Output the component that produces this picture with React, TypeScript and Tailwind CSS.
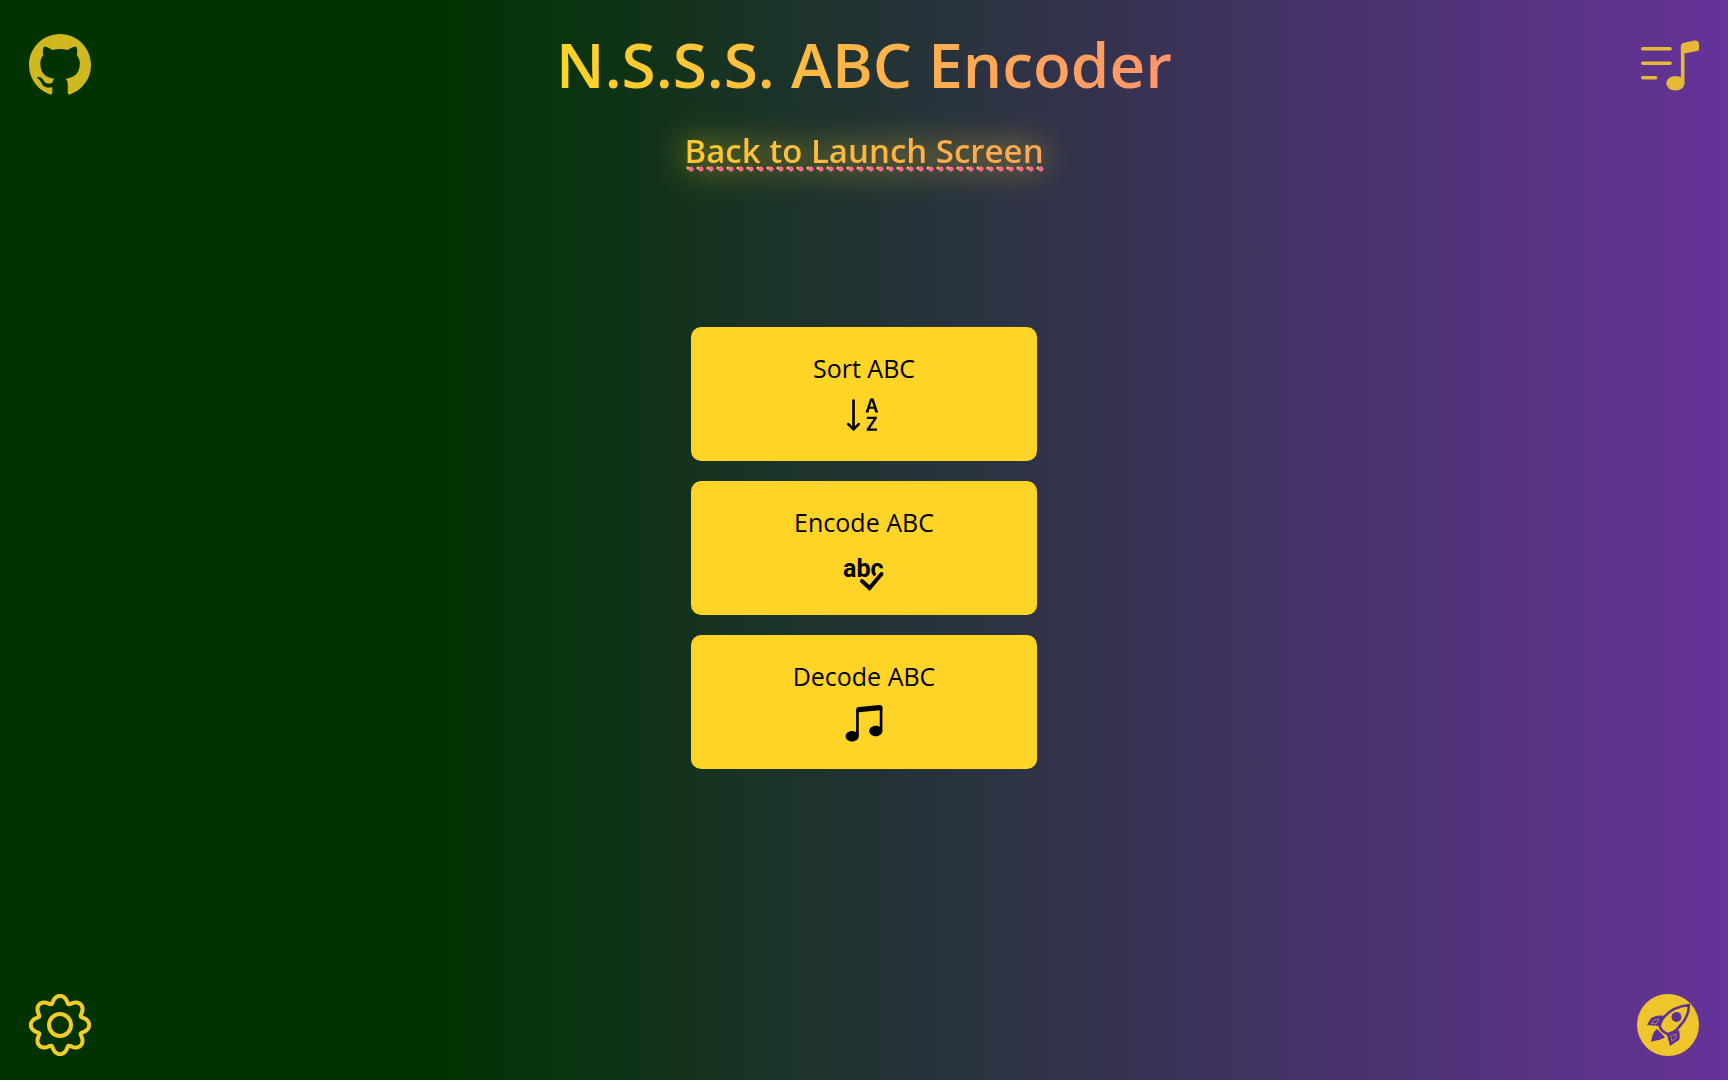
import type { ReactNode } from 'react';
import {
  BsGithub,
  BsMusicNoteBeamed,
  BsMusicNoteList,
  BsSortAlphaDown,
} from 'react-icons/bs';

const GEAR_OUTLINE = Array.from({ length: 160 }, (_, i) => {
  const t = (i / 160) * Math.PI * 2;
  const angle = t + 0.05 * Math.sin(8 * t);
  const radius = 25.8 + 3.4 * Math.cos(8 * t);
  return `${(31 + radius * Math.cos(angle)).toFixed(2)},${(31 + radius * Math.sin(angle)).toFixed(2)}`;
}).join(' ');

function SpellIcon() {
  return (
    <svg viewBox="0 0 42 42" className="size-[42px] overflow-visible" aria-hidden="true">
      <text x="0" y="29" fontFamily="Roboto, sans-serif" fontSize="25" fontWeight="700" fill="#000">
        abc
      </text>
      <path d="M20 33L26.500 39.500L38.500 26.500" fill="none" stroke="#fed426" strokeWidth="8" strokeLinecap="round" />
      <path d="M19 33L26.500 40L38.500 26" fill="none" stroke="#000" strokeWidth="4" strokeLinecap="round" />
    </svg>
  );
}

function GearIcon() {
  return (
    <svg viewBox="0 0 62 62" className="size-[62px]" fill="none" stroke="#f4cc26" strokeWidth="4" strokeLinejoin="round" aria-hidden="true">
      <circle cx="31" cy="31" r="11" />
      <polygon points={GEAR_OUTLINE} />
    </svg>
  );
}

function RocketIcon() {
  return (
    <svg viewBox="0 0 62 62" className="size-[62px]" aria-hidden="true">
      <circle cx="31" cy="31" r="31" fill="#eec52d" />
      <g fill="#5c3193">
        <path d="M14 24C18 22 22 21 27 22L22 32L10 31Z" />
        <path d="M42 36C43 40 43 44 42 46L33 52L30 41Z" />
        <path d="M20 35L28 43C25 46 20 46 14 48C15 43 16 38 20 35Z" />
      </g>
      <path d="M17 26L22 25L19 30L14 29Z M39 40L39 44L35 47L33.500 42Z" fill="none" stroke="#a98166" strokeWidth="1" />
      <path
        d="M52 11C42 12 33 16 27 23C24 26 24 29 22.500 32C24 36 27 39 31 40C35 39 38 38 42 33C49 26 52 19 52 11Z"
        fill="#eec52d"
        stroke="#5c3193"
        strokeWidth="2.500"
        strokeLinejoin="round"
      />
      <circle cx="39.500" cy="23" r="5" fill="#5c3193" />
    </svg>
  );
}

function Card({ label, children }: { label: string; children: ReactNode }) {
  return (
    <button
      type="button"
      className="flex w-full flex-col items-center gap-[10px] rounded-[10px] bg-[#fed426] py-[25px] text-[25px] leading-8 text-black"
    >
      <span>{label}</span>
      {children}
    </button>
  );
}

export default function App() {
  return (
    <div className="flex min-h-screen flex-col bg-[linear-gradient(90deg,#003300_25%,#663399)] font-['Trebuchet_MS','Open_Sans',sans-serif]">
      <header className="flex items-start justify-between px-[29px] pt-[34px]">
        <a href="#github" aria-label="GitHub" className="text-[#d0b820]">
          <BsGithub className="size-[62px]" />
        </a>
        <div className="flex flex-col items-center">
          <h1 className="bg-[linear-gradient(90deg,#fed426,#ff956c)] bg-clip-text text-[62px] leading-[60px] font-semibold text-transparent">
            N.S.S.S. ABC Encoder
          </h1>
          <a
            href="#launch"
            className="relative mt-9 bg-[linear-gradient(90deg,#ffc832,#ffa556)] bg-clip-text text-[33px] leading-[42px] font-semibold text-transparent drop-shadow-[0_0_16px_#fed426cc] after:absolute after:inset-x-0 after:bottom-0 after:h-[6px] after:bg-[radial-gradient(circle_at_7px_3px,#ff64a0_2px,transparent_3px),radial-gradient(circle_at_4px_2px,#ffc53a_1px,transparent_2px)] after:bg-[length:10px_6px] after:bg-repeat-round"
          >
            Back to Launch Screen
          </a>
        </div>
        <button type="button" aria-label="Song list" className="flex h-[62px] w-[62px] items-center justify-end text-[#e6b937]">
          <BsMusicNoteList className="size-[58px]" />
        </button>
      </header>

      <main className="mx-auto mt-[155px] mb-auto flex w-1/5 flex-col gap-5">
        <Card label="Sort ABC">
          <BsSortAlphaDown className="size-[42px]" />
        </Card>
        <Card label="Encode ABC">
          <SpellIcon />
        </Card>
        <Card label="Decode ABC">
          <BsMusicNoteBeamed className="size-[42px]" />
        </Card>
      </main>

      <footer className="flex items-end justify-between px-[29px] pb-6">
        <button type="button" aria-label="Settings">
          <GearIcon />
        </button>
        <button type="button" aria-label="Launch">
          <RocketIcon />
        </button>
      </footer>
    </div>
  );
}
